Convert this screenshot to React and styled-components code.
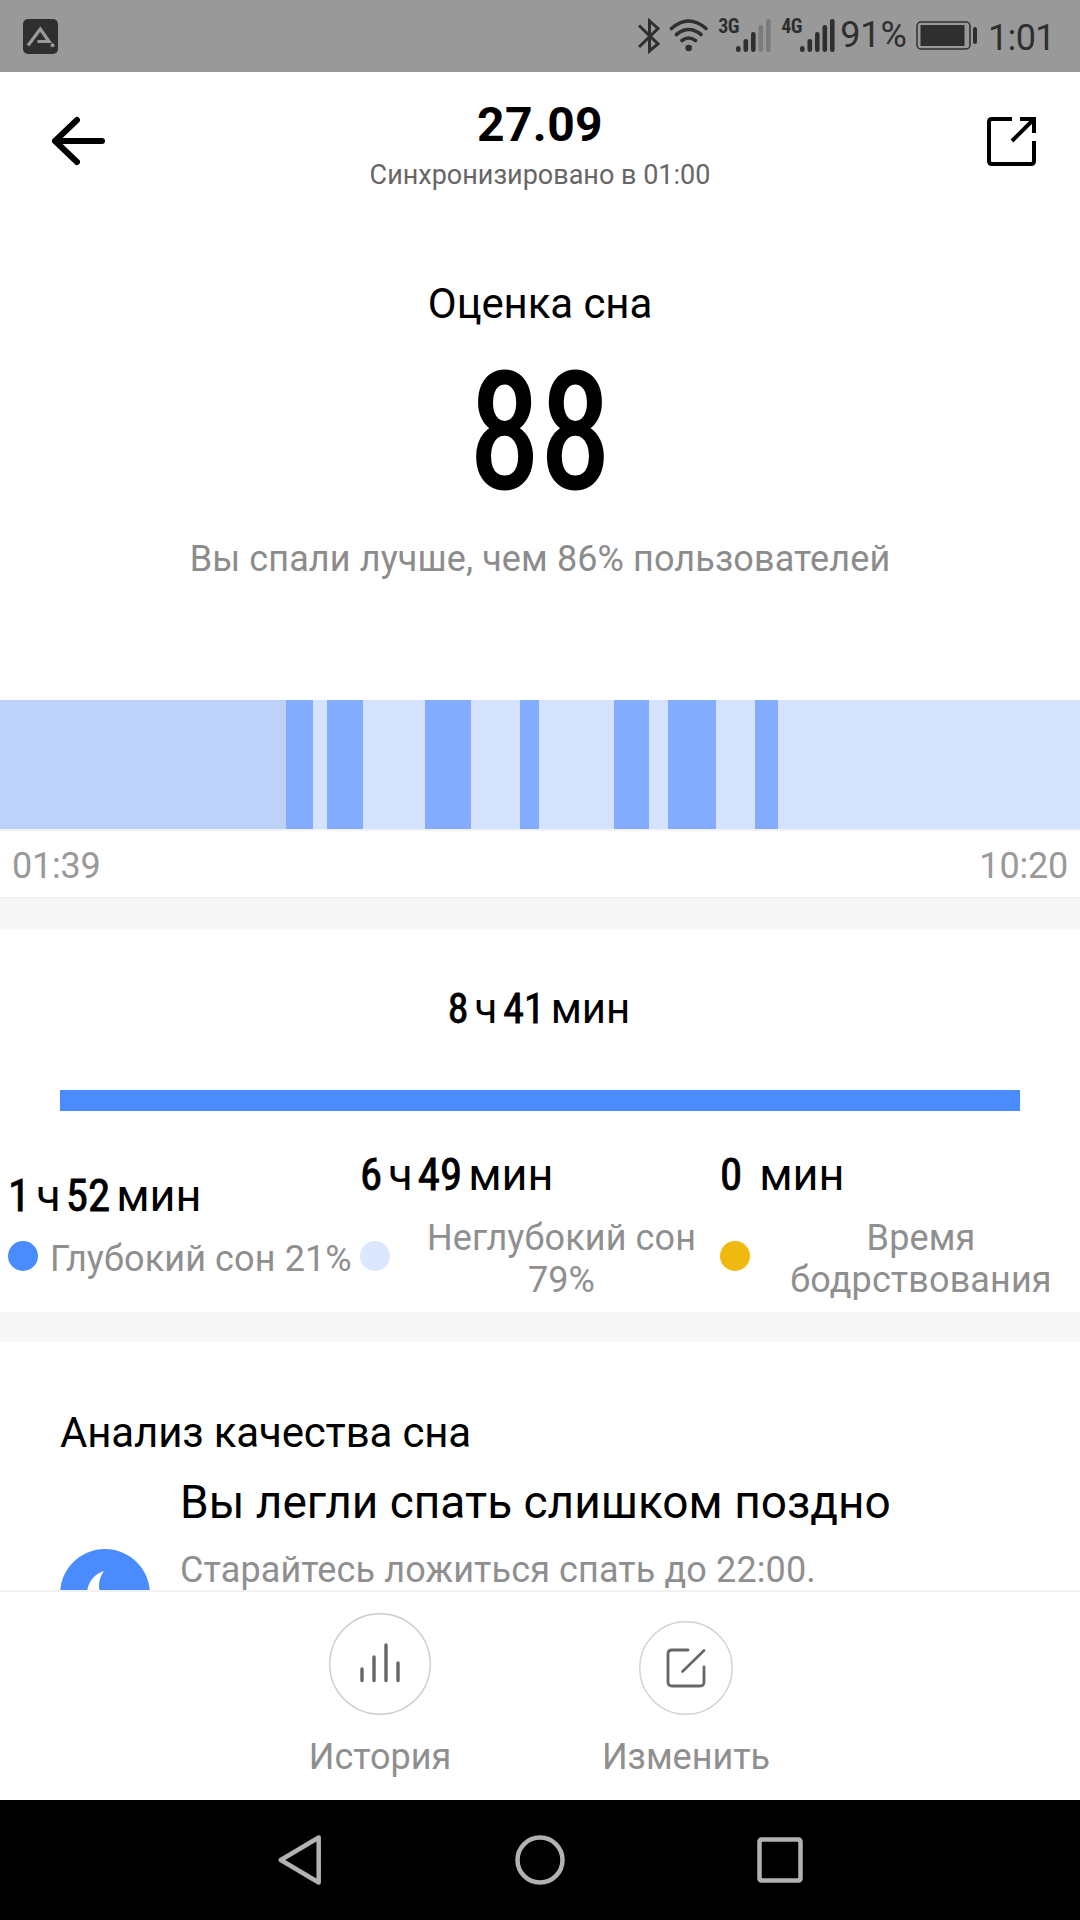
import React from 'react';
import styled, { createGlobalStyle, css } from 'styled-components';

const GlobalStyle = createGlobalStyle`
  body {
    margin: 0;
    background: #fff;
    font-family: Roboto, sans-serif;
  }

  * {
    box-sizing: border-box;
  }

  svg {
    display: block;
    flex: none;
  }
`;

// condensed digits, a bit heavier than regular but lighter than medium
const condensedDigits = css`
  font-weight: 400;
  font-stretch: 75%;
  -webkit-text-stroke: 0.018em #000;
`;

const Screen = styled.div`
  display: flex;
  flex-direction: column;
  width: 1080px;
  height: 1920px;
  overflow: hidden;
  background: #fff;
  color: #000;
`;

const StatusBar = styled.div`
  display: flex;
  align-items: flex-start;
  flex: none;
  height: 72px;
  padding: 0 25px 0 23px;
  background: #999;
  color: #2f2f2f;
`;

const StatusIcon = styled.svg`
  margin-top: 18px;
  margin-left: ${props => props.$gap || 0}px;
`;

const StatusSpacer = styled.div`
  flex: 1;
`;

const Network = styled.span`
  width: 19px;
  margin-top: 18px;
  margin-left: ${props => props.$gap}px;
  font-size: 20px;
  font-weight: 700;
  font-stretch: 75%;
  letter-spacing: -0.5px;
  line-height: 17px;
  white-space: nowrap;
`;

const StatusText = styled.span`
  margin-top: ${props => props.$top}px;
  margin-left: ${props => props.$gap}px;
  font-size: 36px;
  line-height: 40px;
  letter-spacing: ${props => props.$tracking || 0}px;
  white-space: nowrap;
`;

const Header = styled.header`
  display: grid;
  grid-template-columns: 1fr auto 1fr;
  flex: none;
  height: 138px;
  padding: 0 43px;
`;

const HeaderIcon = styled.svg`
  margin: 44px 0 0 8px;
  justify-self: ${props => props.$side};
`;

const HeaderText = styled.div`
  padding-top: 25px;
  text-align: center;
`;

const Title = styled.h1`
  margin: 0;
  font-size: 48px;
  font-weight: 700;
  line-height: 56px;
  letter-spacing: 0.4px;
`;

const Subtitle = styled.div`
  margin-top: 6px;
  font-size: 27px;
  line-height: 32px;
  color: #666;
`;

const Score = styled.section`
  flex: none;
  height: 490px;
  padding-top: 69px;
  text-align: center;
`;

const ScoreLabel = styled.div`
  font-size: 42px;
  line-height: 50px;
  letter-spacing: -0.1px;
`;

const ScoreValue = styled.div`
  margin-top: 43px;
  font-size: 161px;
  line-height: 120px;
  transform: scaleX(0.89);
  ${condensedDigits}
`;

const ScoreHint = styled.div`
  margin-top: 46px;
  font-size: 36px;
  line-height: 42px;
  letter-spacing: 0.11px;
  color: #8c8c8c;
`;

const Timeline = styled.div`
  display: flex;
  flex: none;
  height: 131px;
  border-bottom: 2px solid #f2f2f2;
`;

const phaseColors = {
  selected: '#bdd1f9',
  deep: '#83abfe',
  light: '#d5e2fe',
};

const Phase = styled.div`
  flex: ${props => props.$length} 0 0;
  background: ${props => phaseColors[props.$kind]};
`;

const TimeRange = styled.div`
  display: flex;
  justify-content: space-between;
  flex: none;
  height: 66px;
  padding: 14px 12px 0;
  font-size: 36px;
  line-height: 42px;
  letter-spacing: -0.2px;
  color: #999;
`;

const Gap = styled.div`
  flex: none;
  height: 30px;
  background: #f7f7f7;

  ${props => props.$lined && css`
    height: 32px;
    border-top: 2px solid #f2f2f2;
  `}
`;

const Summary = styled.section`
  display: flex;
  flex-direction: column;
  flex: none;
  height: 383px;
`;

const Total = styled.div`
  display: flex;
  justify-content: center;
  height: 161px;
  padding: 55px 2px 0 0;
`;

const DurationRow = styled.div`
  display: flex;
  align-items: baseline;
  font-size: ${props => props.$size}px;
  line-height: 50px;
  white-space: pre;
`;

const Digits = styled.span`
  ${condensedDigits}
`;

const Unit = styled.span`
  margin: 0 ${props => props.$after || 0}px 0 ${props => props.$before}px;
`;

const TotalBar = styled.div`
  flex: none;
  height: 21px;
  margin: 0 60px;
  background: #4a8cff;
`;

const Phases = styled.div`
  display: grid;
  grid-template-columns: 352px 360px 1fr;
  align-items: center;
  height: 201px;
  padding: 27px 0 0 8px;
`;

const PhaseStat = styled.div`
  display: flex;
  flex-direction: column;
`;

const Legend = styled.div`
  display: flex;
  align-items: center;
  margin-top: 11px;
`;

const Dot = styled.span`
  flex: none;
  width: 30px;
  height: 30px;
  border-radius: 50%;
  background: ${props => props.$color};
`;

const LegendText = styled.span`
  flex: 1;
  padding: 6px 0 0 ${props => props.$inset}px;
  font-size: 36px;
  line-height: 42px;
  letter-spacing: 0.12px;
  text-align: ${props => props.$align};
  white-space: nowrap;
  color: #8f8f8f;
`;

const Analysis = styled.section`
  flex: 1;
  min-height: 0;
  overflow: hidden;
  padding: 66px 60px 0;
`;

const AnalysisTitle = styled.h2`
  margin: 0;
  font-size: 42px;
  font-weight: 400;
  line-height: 50px;
  letter-spacing: -0.15px;
`;

const Advice = styled.div`
  display: flex;
  margin-top: 16px;
`;

const AdviceIcon = styled.svg`
  margin: 75px 30px 0 0;
`;

const AdviceTitle = styled.div`
  font-size: 46px;
  line-height: 56px;
  white-space: nowrap;
`;

const AdviceText = styled.div`
  margin-top: 19px;
  font-size: 36px;
  line-height: 42px;
  letter-spacing: 0.12px;
  white-space: nowrap;
  color: #8f8f8f;
`;

const Actions = styled.div`
  display: flex;
  justify-content: center;
  flex: none;
  height: 210px;
  padding-right: 14px;
  border-top: 2px solid #f2f2f2;
`;

const Action = styled.button`
  display: flex;
  flex-direction: column;
  align-items: center;
  width: 306px;
  padding: 21px 0 0;
  border: 0;
  background: none;
  font: 36px/42px Roboto, sans-serif;
  color: #8f8f8f;
`;

const ActionLabel = styled.span`
  margin-top: 21px;
`;

const NavBar = styled.nav`
  display: flex;
  align-items: center;
  justify-content: center;
  gap: 190px;
  flex: none;
  height: 120px;
  background: #000;
`;

const phases = [
  { kind: 'selected', length: 286 },
  { kind: 'deep', length: 27 },
  { kind: 'light', length: 14 },
  { kind: 'deep', length: 36 },
  { kind: 'light', length: 62 },
  { kind: 'deep', length: 46 },
  { kind: 'light', length: 49 },
  { kind: 'deep', length: 19 },
  { kind: 'light', length: 75 },
  { kind: 'deep', length: 35 },
  { kind: 'light', length: 19 },
  { kind: 'deep', length: 48 },
  { kind: 'light', length: 39 },
  { kind: 'deep', length: 23 },
  { kind: 'light', length: 302 },
];

const signalBars = [
  { x: 0, y: 27 },
  { x: 7.5, y: 20 },
  { x: 15, y: 13 },
  { x: 22.5, y: 6 },
  { x: 30, y: 0 },
];

const Signal = ({ level, gap }) => (
  <StatusIcon $gap={gap} width="35" height="36" viewBox="0 0 35 36">
    {signalBars.map((bar, i) => (
      <rect
        key={bar.x}
        x={bar.x}
        y={bar.y + 1}
        width="4.6"
        height={33 - bar.y}
        rx="2.2"
        fill={i < level ? '#2f2f2f' : '#7b7b7b'}
      />
    ))}
  </StatusIcon>
);

const Duration = ({ hours, minutes, size, gap = 5 }) => (
  <DurationRow $size={size}>
    {hours && <Digits>{hours}</Digits>}
    {hours && <Unit $before={6} $after={gap}>ч</Unit>}
    <Digits>{minutes}</Digits>
    <Unit $before={hours ? 6 : 17}>мин</Unit>
  </DurationRow>
);

const App = () => (
  <Screen>
    <GlobalStyle />
    <StatusBar>
      <StatusIcon width="35" height="36" viewBox="0 0 35 36">
        <rect y="1" width="35" height="35" rx="5" fill="#2f2f2f" />
        <path d="M5 27.5 17.3 11 26 23.5H14.5" fill="none" stroke="#999" strokeWidth="3.2" />
        <circle cx="29.5" cy="27.2" r="2" fill="#999" />
      </StatusIcon>
      <StatusSpacer />
      <StatusIcon width="22" height="36" viewBox="0 0 22 36" fill="none" stroke="#2f2f2f" strokeWidth="3">
        <path d="M1 7.5 20 26 11.5 33V3L20 10.5 1 29" />
      </StatusIcon>
      <StatusIcon $gap={9} width="40" height="36" viewBox="0 0 40 36" fill="none" stroke="#2f2f2f" strokeWidth="3.6" strokeLinecap="round">
        <path d="M2.5 10.5Q19.5-4.5 37 10.5M7.5 16.5Q19.5 6.5 32 16.5M13 22.5Q19.5 17.5 26.5 22.5" />
        <circle cx="19.7" cy="30" r="3.3" fill="#2f2f2f" stroke="none" />
      </StatusIcon>
      <Network $gap={9}>3G</Network>
      <Signal level={3} gap={-1} />
      <Network $gap={10}>4G</Network>
      <Signal level={5} gap={0} />
      <StatusText $top={15} $gap={5}>91%</StatusText>
      <StatusIcon $gap={9} width="62" height="36" viewBox="0 0 62 36">
        <rect x="1" y="4" width="53" height="27" rx="4" fill="none" stroke="#2f2f2f" strokeWidth="1.5" />
        <rect x="4.5" y="7" width="44" height="21" fill="#2f2f2f" />
        <rect x="57" y="9" width="4" height="17" rx="2" fill="#2f2f2f" />
      </StatusIcon>
      <StatusText $top={18} $gap={10} $tracking={-0.6}>1:01</StatusText>
    </StatusBar>

    <Header>
      <HeaderIcon $side="start" width="56" height="50" viewBox="0 0 56 50" fill="none" stroke="#000" strokeWidth="6" strokeLinecap="round" strokeLinejoin="round">
        <path d="M51 25H4M26 4 4 25l22 21" />
      </HeaderIcon>
      <HeaderText>
        <Title>27.09</Title>
        <Subtitle>Синхронизировано в 01:00</Subtitle>
      </HeaderText>
      <HeaderIcon $side="end" width="50" height="50" viewBox="0 0 50 50" fill="none" stroke="#000" strokeWidth="4">
        <path d="M25 3H5Q2 3 2 6V45Q2 48 5 48H44Q47 48 47 45V25" />
        <path d="M33 3H47V17M46 4 25 25" />
      </HeaderIcon>
    </Header>

    <Score>
      <ScoreLabel>Оценка сна</ScoreLabel>
      <ScoreValue>88</ScoreValue>
      <ScoreHint>Вы спали лучше, чем 86% пользователей</ScoreHint>
    </Score>

    <Timeline>
      {phases.map((phase, i) => (
        <Phase key={i} $kind={phase.kind} $length={phase.length} />
      ))}
    </Timeline>
    <TimeRange>
      <span>01:39</span>
      <span>10:20</span>
    </TimeRange>
    <Gap $lined />

    <Summary>
      <Total>
        <Duration hours="8" minutes="41" size={42} gap={6} />
      </Total>
      <TotalBar />
      <Phases>
        <PhaseStat>
          <Duration hours="1" minutes="52" size={45} />
          <Legend>
            <Dot $color="#4a8cff" />
            <LegendText $inset={12}>Глубокий сон 21%</LegendText>
          </Legend>
        </PhaseStat>
        <PhaseStat>
          <Duration hours="6" minutes="49" size={45} />
          <Legend>
            <Dot $color="#dbe7ff" />
            <LegendText $inset={13} $align="center">Неглубокий сон<br />79%</LegendText>
          </Legend>
        </PhaseStat>
        <PhaseStat>
          <Duration minutes="0" size={45} />
          <Legend>
            <Dot $color="#efb90f" />
            <LegendText $inset={12} $align="center">Время<br />бодрствования</LegendText>
          </Legend>
        </PhaseStat>
      </Phases>
    </Summary>
    <Gap />

    <Analysis>
      <AnalysisTitle>Анализ качества сна</AnalysisTitle>
      <Advice>
        <AdviceIcon width="90" height="90" viewBox="0 0 90 90">
          <circle cx="45" cy="45" r="45" fill="#4a8cff" />
          <path d="M44 22C34 25 27 34 27 45C27 58 36 66 48 66C56 66 63 61 66 55C52 59 39 50 39 37C39 31 41 26 44 22Z" fill="#fff" />
        </AdviceIcon>
        <div>
          <AdviceTitle>Вы легли спать слишком поздно</AdviceTitle>
          <AdviceText>Старайтесь ложиться спать до 22:00.</AdviceText>
        </div>
      </Advice>
    </Analysis>

    <Actions>
      <Action>
        <svg width="102" height="102" viewBox="0 0 102 102" fill="none" strokeLinecap="round">
          <circle cx="51" cy="51" r="50.3" stroke="#ccc" strokeWidth="1.4" />
          <path d="M33 56V67.5M45 44V67.5M57 32V67.5M69 50V67.5" stroke="#666" strokeWidth="3.4" />
        </svg>
        <ActionLabel>История</ActionLabel>
      </Action>
      <Action>
        <svg width="94" height="102" viewBox="0 0 94 102" fill="none" strokeLinecap="round">
          <circle cx="47" cy="55" r="46.2" stroke="#d2d2d2" strokeWidth="1.4" />
          <path d="M49 37H33Q29 37 29 41V69Q29 73 33 73H61Q65 73 65 69V54" stroke="#666" strokeWidth="2.8" />
          <path d="M65 37.5 43.5 58.5" stroke="#666" strokeWidth="2.6" />
        </svg>
        <ActionLabel>Изменить</ActionLabel>
      </Action>
    </Actions>

    <NavBar>
      <svg width="50" height="50" viewBox="0 0 50 50" fill="none" stroke="#b2b2b2" strokeWidth="4.5" strokeLinejoin="round">
        <path d="M43.7 2.5V47.5L5.8 25Z" />
      </svg>
      <svg width="50" height="50" viewBox="0 0 50 50" fill="none" stroke="#b2b2b2" strokeWidth="4.5">
        <circle cx="25" cy="25" r="22.5" />
      </svg>
      <svg width="50" height="50" viewBox="0 0 50 50" fill="none" stroke="#b2b2b2" strokeWidth="4.5">
        <rect x="4.5" y="4.5" width="41" height="41" rx="2" />
      </svg>
    </NavBar>
  </Screen>
);

export default App;
